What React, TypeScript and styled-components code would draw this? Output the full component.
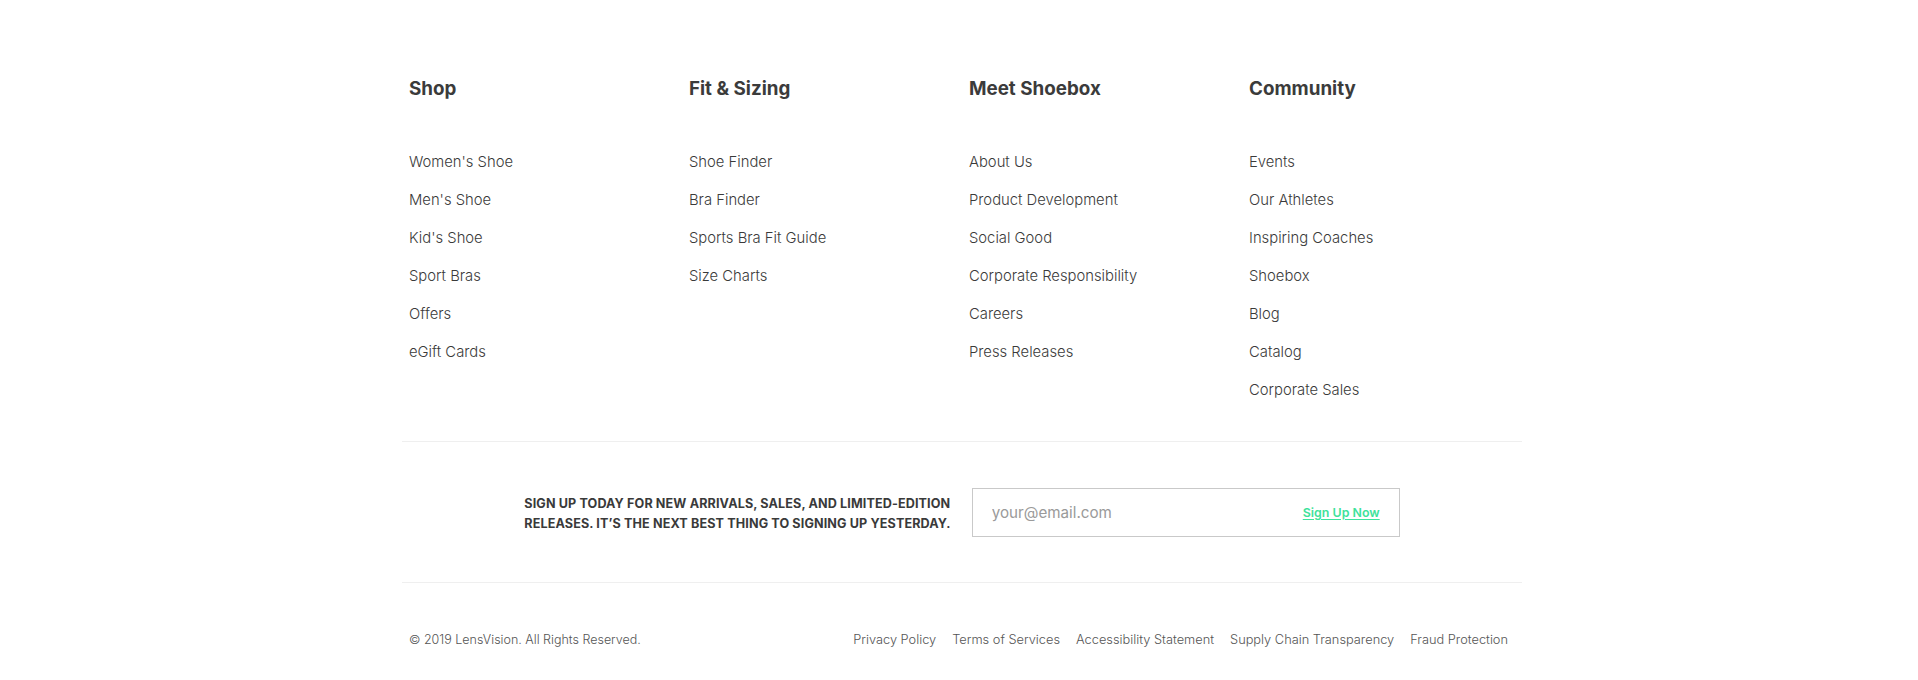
import React from "react";
import styled, { createGlobalStyle } from "styled-components";

const Global = createGlobalStyle`
  html, body { margin: 0; padding: 0; background: #ffffff; }
  body { font-family: "Inter", "DejaVu Sans", sans-serif; -webkit-font-smoothing: antialiased; }
  * { box-sizing: border-box; }
`;

const Page = styled.div`
  display: flex;
  justify-content: center;
  padding-left: 6px;
  height: 680px;
`;

const Footer = styled.footer`
  width: 1120px;
  display: flex;
  flex-direction: column;
`;

const Columns = styled.div`
  display: grid;
  grid-template-columns: repeat(4, 280px);
  padding: 77px 0 41px;
`;

const Column = styled.div`
  display: flex;
  flex-direction: column;
  padding: 0 7px;
`;

const Heading = styled.h3`
  margin: 0 0 51px;
  font-family: "Inter", sans-serif;
  font-size: 18.8px;
  line-height: 24px;
  font-weight: 700;
  color: #3b3b3b;
`;

const LinkList = styled.ul`
  list-style: none;
  margin: 0;
  padding: 0;
  display: flex;
  flex-direction: column;
  gap: 18px;
`;

const LinkItem = styled.li`
  font-family: "Inter", sans-serif;
  font-size: 14.8px;
  line-height: 20px;
  font-weight: 300;
  color: #3a3a3a;
  white-space: nowrap;
`;

const Signup = styled.section`
  border-top: 1px solid #efefef;
  border-bottom: 1px solid #efefef;
  height: 142px;
  display: flex;
  align-items: center;
  justify-content: center;
  gap: 21px;
  padding-left: 0;
`;

const SignupText = styled.p`
  margin: 0;
  padding-top: 3px;
  font-family: "Inter", sans-serif;
  font-size: 12.6px;
  line-height: 19.6px;
  font-weight: 700;
  text-transform: uppercase;
  color: #3a3a3a;
  white-space: nowrap;
  letter-spacing: 0.12px;
`;

const EmailBox = styled.form`
  width: 428px;
  height: 49px;
  border: 1px solid #c9c9c9;
  display: flex;
  align-items: center;
  justify-content: space-between;
  padding: 0 19px 0 19px;
`;

const EmailInput = styled.input`
  border: none;
  outline: none;
  background: transparent;
  font-family: "Inter", sans-serif;
  font-size: 15.2px;
  color: #444;
  width: 240px;
  padding: 0;
  &::placeholder { color: #9a9a9a; }
`;

const SignupButton = styled.button`
  border: none;
  background: transparent;
  padding: 0;
  font-family: "Inter", sans-serif;
  font-size: 12.4px;
  font-weight: 600;
  color: #3ee29b;
  text-decoration: underline;
  text-underline-offset: 2px;
  cursor: pointer;
`;

const Bottom = styled.div`
  display: flex;
  justify-content: space-between;
  align-items: center;
  padding: 49px 14px 0 7px;
`;

const Copyright = styled.span`
  font-family: "Inter", sans-serif;
  font-size: 12.5px;
  line-height: 16px;
  font-weight: 300;
  color: #555;
`;

const LegalLinks = styled.nav`
  display: flex;
  gap: 16px;
`;

const LegalLink = styled.a`
  font-family: "Inter", sans-serif;
  font-size: 12.8px;
  line-height: 16px;
  font-weight: 300;
  color: #555;
  text-decoration: none;
`;

const columns = [
  { title: "Shop", links: ["Women's Shoe", "Men's Shoe", "Kid's Shoe", "Sport Bras", "Offers", "eGift Cards"] },
  { title: "Fit & Sizing", links: ["Shoe Finder", "Bra Finder", "Sports Bra Fit Guide", "Size Charts"] },
  { title: "Meet Shoebox", links: ["About Us", "Product Development", "Social Good", "Corporate Responsibility", "Careers", "Press Releases"] },
  { title: "Community", links: ["Events", "Our Athletes", "Inspiring Coaches", "Shoebox", "Blog", "Catalog", "Corporate Sales"] },
];

const legal = ["Privacy Policy", "Terms of Services", "Accessibility Statement", "Supply Chain Transparency", "Fraud Protection"];

export default function App() {
  return (
    <>
      <Global />
      <Page>
        <Footer>
          <Columns>
            {columns.map((c) => (
              <Column key={c.title}>
                <Heading>{c.title}</Heading>
                <LinkList>
                  {c.links.map((l) => (
                    <LinkItem key={l}>{l}</LinkItem>
                  ))}
                </LinkList>
              </Column>
            ))}
          </Columns>
          <Signup>
            <SignupText>
              Sign up today for new arrivals, sales, and limited-edition
              <br />
              releases. It’s the next best thing to signing up yesterday.
            </SignupText>
            <EmailBox onSubmit={(e) => e.preventDefault()}>
              <EmailInput placeholder="your@email.com" />
              <SignupButton type="submit">Sign Up Now</SignupButton>
            </EmailBox>
          </Signup>
          <Bottom>
            <Copyright>© 2019 LensVision. All Rights Reserved.</Copyright>
            <LegalLinks>
              {legal.map((l) => (
                <LegalLink key={l} href="#">{l}</LegalLink>
              ))}
            </LegalLinks>
          </Bottom>
        </Footer>
      </Page>
    </>
  );
}
